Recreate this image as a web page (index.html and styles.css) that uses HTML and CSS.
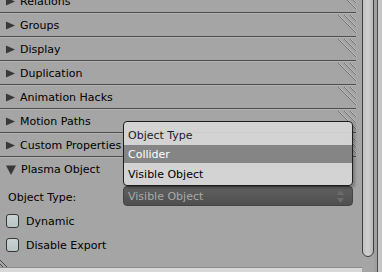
FILE: index.html
```html
<!DOCTYPE html>
<html>
<head>
<meta charset="utf-8">
<link rel="stylesheet" href="styles.css">
</head>
<body>
<div class="window">
  <div class="main">
    <div class="panels">
      <div class="hdr first"><svg class="tri" width="9" height="9" viewBox="0 0 9 9"><polygon points="0,0.5 9,4.5 0,8.5"/></svg><span>Relations</span><svg class="grip" width="18" height="18" viewBox="0 0 18 18"><path d="M0 0L18 18M6 0L18 12M12 0L18 6"/></svg></div>
      <div class="hdr"><svg class="tri" width="9" height="9" viewBox="0 0 9 9"><polygon points="0,0.5 9,4.5 0,8.5"/></svg><span>Groups</span><svg class="grip" width="18" height="18" viewBox="0 0 18 18"><path d="M0 0L18 18M6 0L18 12M12 0L18 6"/></svg></div>
      <div class="hdr"><svg class="tri" width="9" height="9" viewBox="0 0 9 9"><polygon points="0,0.5 9,4.5 0,8.5"/></svg><span>Display</span><svg class="grip" width="18" height="18" viewBox="0 0 18 18"><path d="M0 0L18 18M6 0L18 12M12 0L18 6"/></svg></div>
      <div class="hdr"><svg class="tri" width="9" height="9" viewBox="0 0 9 9"><polygon points="0,0.5 9,4.5 0,8.5"/></svg><span>Duplication</span><svg class="grip" width="18" height="18" viewBox="0 0 18 18"><path d="M0 0L18 18M6 0L18 12M12 0L18 6"/></svg></div>
      <div class="hdr"><svg class="tri" width="9" height="9" viewBox="0 0 9 9"><polygon points="0,0.5 9,4.5 0,8.5"/></svg><span>Animation Hacks</span><svg class="grip" width="18" height="18" viewBox="0 0 18 18"><path d="M0 0L18 18M6 0L18 12M12 0L18 6"/></svg></div>
      <div class="hdr"><svg class="tri" width="9" height="9" viewBox="0 0 9 9"><polygon points="0,0.5 9,4.5 0,8.5"/></svg><span>Motion Paths</span><svg class="grip" width="18" height="18" viewBox="0 0 18 18"><path d="M0 0L18 18M6 0L18 12M12 0L18 6"/></svg></div>
      <div class="hdr"><svg class="tri" width="9" height="9" viewBox="0 0 9 9"><polygon points="0,0.5 9,4.5 0,8.5"/></svg><span>Custom Properties</span><svg class="grip" width="18" height="18" viewBox="0 0 18 18"><path d="M0 0L18 18M6 0L18 12M12 0L18 6"/></svg></div>
      <div class="hdr open"><svg class="tri" width="10" height="10" viewBox="0 0 10 10"><polygon points="0,0.5 10,0.5 5,10"/></svg><span>Plasma Object</span></div>
      <div class="body">
        <div class="prop">
          <span class="label">Object Type:</span>
          <div class="select">
            <span>Visible Object</span>
            <svg class="updown" width="7" height="13" viewBox="0 0 7 13"><polygon points="3.5,0 7,5 0,5"/><polygon points="0,8 7,8 3.5,13"/></svg>
          </div>
        </div>
        <label class="check"><span class="box"></span><span>Dynamic</span></label>
        <label class="check"><span class="box"></span><span>Disable Export</span></label>
      </div>
      <svg class="corner" width="8" height="8" viewBox="0 0 8 8"><path d="M0 1L7 8M0 5L3 8"/></svg>
      <div class="menu">
        <div class="mtitle">Object Type</div>
        <div class="mitem active">Collider</div>
        <div class="mitem last">Visible Object</div>
      </div>
    </div>
    <div class="footer"></div>
  </div>
  <div class="scroll">
    <div class="thumb"></div>
    <div class="gap"></div>
    <div class="edge"></div>
    <div class="outer"></div>
  </div>
</div>
</body>
</html>
```

FILE: styles.css
```css
html, body {
  margin: 0;
  padding: 0;
}
body {
  width: 382px;
  height: 272px;
  overflow: hidden;
  background: #a5a5a5;
  font-family: "DejaVu Sans", "Liberation Sans", sans-serif;
  font-size: 11px;
  color: #000;
}
.window {
  display: flex;
  width: 382px;
  height: 272px;
}
.main {
  width: 362px;
  display: flex;
  flex-direction: column;
}
.panels {
  position: relative;
  height: 268px;
  overflow: hidden;
  border-bottom: 1px solid #8c8c8c;
  box-sizing: border-box;
}
.hdr {
  width: 356px;
  height: 24px;
  box-sizing: border-box;
  border-bottom: 1px solid #4e4e4e;
  box-shadow: inset 0 1px 0 #b2b2b2;
  display: flex;
  align-items: center;
  padding-left: 6px;
  padding-top: 1px;
  gap: 5px;
}
.hdr.first {
  margin-top: -11px;
}
.hdr.open {
  border-bottom: none;
}
.tri {
  fill: #383838;
  flex: none;
}
.grip {
  margin-left: auto;
  align-self: flex-start;
  margin-top: 1px;
  stroke: #737373;
  stroke-width: 1;
  fill: none;
  filter: drop-shadow(1px 0 0 #bcbcbc);
}
.body {
  padding-top: 5px;
}
.prop {
  display: grid;
  grid-template-columns: 123px 230px;
  align-items: center;
  height: 20px;
}
.label {
  padding-left: 8px;
  padding-top: 2px;
}
.select {
  height: 20px;
  box-sizing: border-box;
  border-radius: 4px;
  background: linear-gradient(#606060, #4f4f4f);
  border: 1px solid #444;
  color: #aaaaaa;
  display: flex;
  align-items: center;
  padding-left: 4px;
  padding-right: 8px;
}
.select span {
  flex: 1;
}
.updown {
  fill: #6c6c6c;
}
.check {
  display: flex;
  align-items: center;
  height: 24px;
  padding-left: 6px;
  gap: 7px;
}
.prop + .check {
  margin-top: 3px;
}
.box {
  width: 13px;
  height: 14px;
  box-sizing: border-box;
  border: 1px solid #363636;
  border-radius: 3px;
  background: linear-gradient(#c9d3d3, #b9c4c4);
}
.corner {
  position: absolute;
  left: 0;
  bottom: 0;
  stroke: #4a4a4a;
  stroke-width: 1;
  fill: none;
}
.menu {
  position: absolute;
  left: 123px;
  top: 121px;
  width: 230px;
  box-sizing: border-box;
  border: 1px solid #1e1e1e;
  border-radius: 4px;
  background: rgba(214, 214, 214, 0.93);
  box-shadow: 2px 2px 3px rgba(0, 0, 0, 0.25);
  overflow: hidden;
}
.mtitle {
  height: 23px;
  line-height: 27px;
  padding-left: 4px;
  color: #1c1c1c;
}
.mitem {
  height: 18px;
  line-height: 19px;
  padding-left: 4px;
  color: #000;
}
.mitem.active {
  background: #858585;
  color: #fff;
}
.mitem.last {
  height: 22px;
  line-height: 23px;
}
.footer {
  flex: 1;
  background: #d8d8d8;
}
.scroll {
  width: 20px;
  display: flex;
  height: 272px;
}
.thumb {
  width: 12px;
  height: 263px;
  margin-top: -6px;
  box-sizing: border-box;
  border: 1px solid #3e3e3e;
  border-radius: 6px;
  background: linear-gradient(90deg, #c2c2c2, #cfcfcf 50%, #b8b8b8);
}
.gap {
  width: 3px;
  background: #a0a0a0;
}
.edge {
  width: 1px;
  background: #4a4a4a;
}
.outer {
  flex: 1;
  background: #c6c6c6;
}
```
